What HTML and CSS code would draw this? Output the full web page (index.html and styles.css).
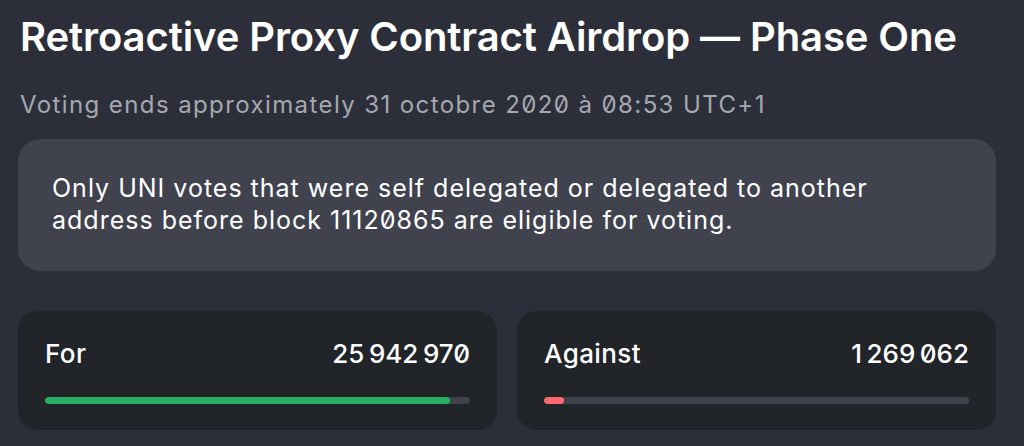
FILE: index.html
```html
<!DOCTYPE html>
<html>

<head>
	<meta charset="utf-8">
	<title>Retroactive Proxy Contract Airdrop</title>
	<link rel="stylesheet" href="styles.css">
</head>

<body>
	<div class="proposal">
		<h1 class="title">Retroactive Proxy Contract Airdrop — Phase One</h1>
		<p class="ends">Voting ends approximately 31 octobre 2020 à 08:53 UTC+1</p>

		<div class="notice">
			Only UNI votes that were self delegated or delegated to another<br>
			address before block 11120865 are eligible for voting.
		</div>

		<div class="votes">
			<div class="card">
				<div class="card-head">
					<span class="label">For</span>
					<span class="count">25&#8239;942&#8239;970</span>
				</div>
				<div class="track"><div class="fill for" style="width: 95.3%"></div></div>
			</div>
			<div class="card">
				<div class="card-head">
					<span class="label">Against</span>
					<span class="count">1&#8239;269&#8239;062</span>
				</div>
				<div class="track"><div class="fill against" style="width: 4.7%"></div></div>
			</div>
		</div>
	</div>
</body>

</html>
```

FILE: styles.css
```css
body {
	margin: 0;
	background-color: #2c2f3a;
	font-family: Inter, 'Noto Sans', sans-serif;
	font-feature-settings: "zero" 1;
	color: white;
}

.proposal {
	padding: 13px 28px 0 18px;
}

.title {
	margin: 0;
	padding-left: 2px;
	font-size: 40px;
	font-weight: 600;
	line-height: 48px;
	letter-spacing: -0.1px;
}

.ends {
	margin: 29px 0 0 0;
	padding-left: 2px;
	font-size: 24px;
	line-height: 30px;
	letter-spacing: 1.4px;
	color: #a5a8af;
}

.notice {
	margin-top: 19px;
	background-color: #40434e;
	border-radius: 22px;
	padding: 33px 34px 35px 34px;
	font-size: 25px;
	line-height: 32px;
	letter-spacing: 1px;
}

.votes {
	display: grid;
	grid-template-columns: 1fr 1fr;
	gap: 20px;
	margin-top: 40px;
}

.card {
	background-color: #212429;
	border-radius: 20px;
	padding: 28px 27px 26px 27px;
}

.card-head {
	display: flex;
	justify-content: space-between;
	align-items: baseline;
	font-size: 26px;
	font-weight: 500;
	line-height: 30px;
	letter-spacing: 0.4px;
}

.track {
	margin-top: 28px;
	height: 7px;
	border-radius: 4px;
	background-color: #40434e;
	overflow: hidden;
}

.fill {
	height: 100%;
	border-radius: 4px;
}

.for {
	background-color: #27ae60;
}

.against {
	background-color: #ff6871;
}
```
